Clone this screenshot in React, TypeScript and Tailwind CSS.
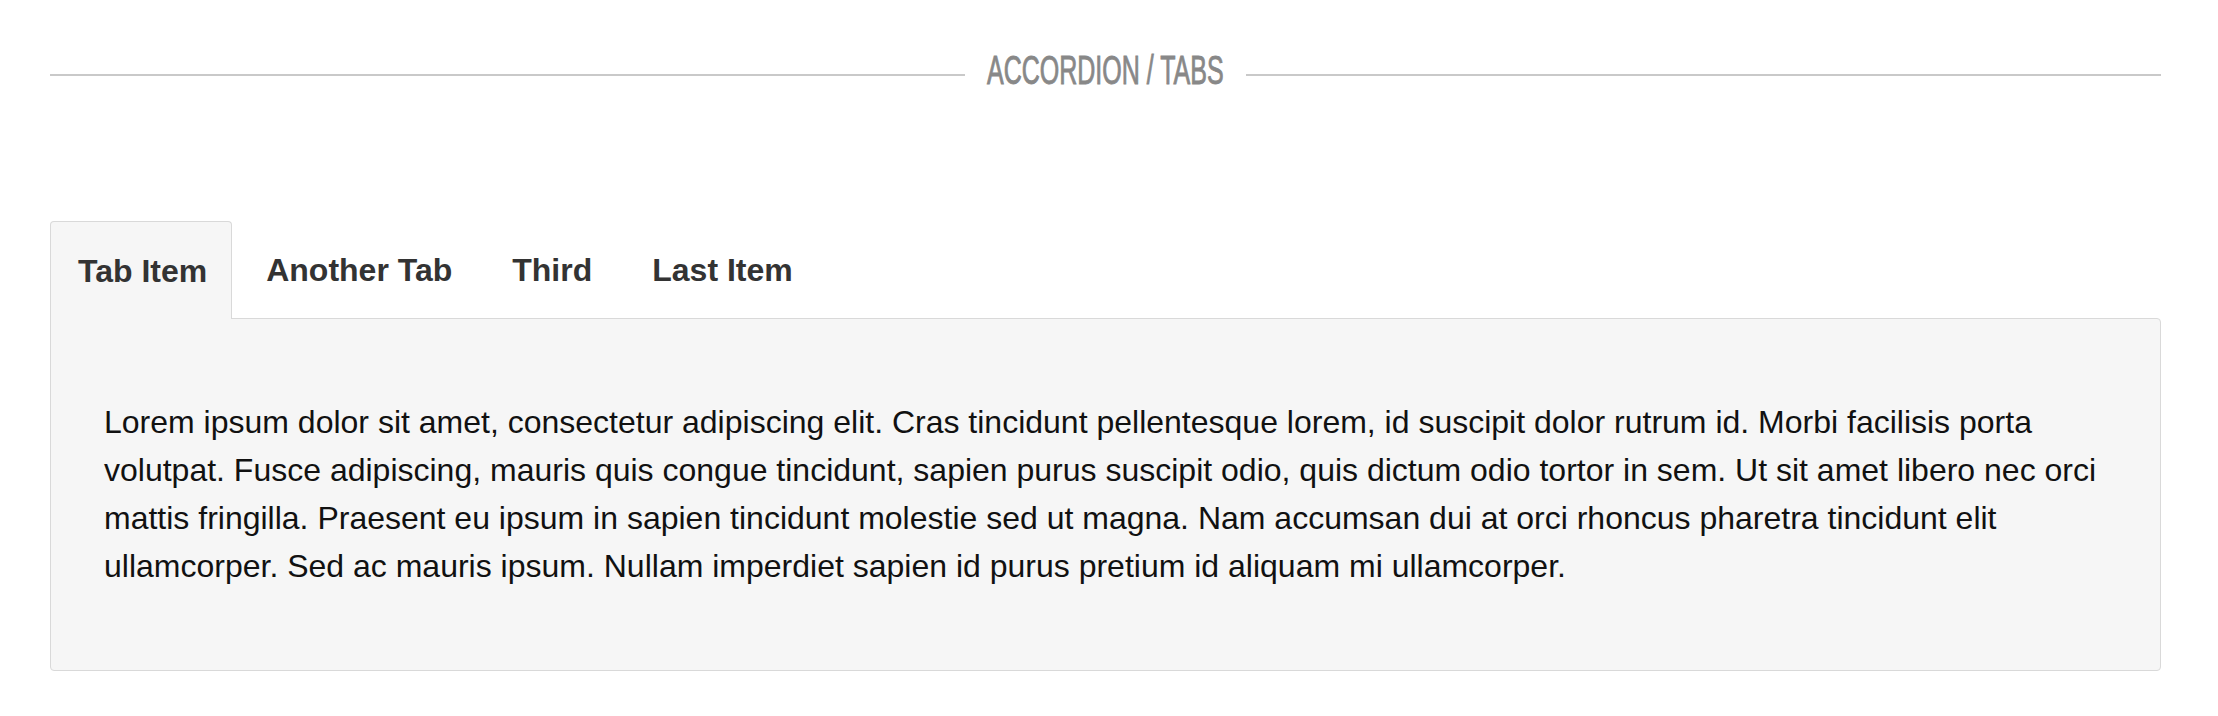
import React, { useState } from 'react'

const tabs = ['Tab Item', 'Another Tab', 'Third', 'Last Item']

const lines = [
  'Lorem ipsum dolor sit amet, consectetur adipiscing elit. Cras tincidunt pellentesque lorem, id suscipit dolor rutrum id. Morbi facilisis porta',
  'volutpat. Fusce adipiscing, mauris quis congue tincidunt, sapien purus suscipit odio, quis dictum odio tortor in sem. Ut sit amet libero nec orci',
  'mattis fringilla. Praesent eu ipsum in sapien tincidunt molestie sed ut magna. Nam accumsan dui at orci rhoncus pharetra tincidunt elit',
  'ullamcorper. Sed ac mauris ipsum. Nullam imperdiet sapien id purus pretium id aliquam mi ullamcorper.',
]

const App = () => {
  const [active, setActive] = useState(0)

  return (
    <div className="min-h-[716px] bg-white pl-[50px] pr-[57px] font-['Liberation_Sans',Arial,sans-serif]">
      {/* section heading */}
      <div className="flex items-start pt-[50px]">
        <div className="mt-[24px] h-[2px] flex-1 bg-[#c9c9c9]" />
        <div className="mx-[21px] flex h-[40px] w-[239px] justify-center">
          <span className="inline-block origin-center scale-x-[0.625] whitespace-nowrap text-[40px] leading-[40px] text-[#888] [-webkit-text-stroke:0.9px_#888]">
            ACCORDION / TABS
          </span>
        </div>
        <div className="mt-[24px] h-[2px] flex-1 bg-[#c9c9c9]" />
      </div>

      {/* tabs */}
      <div className="mt-[131px]">
        <div className="flex">
          {tabs.map((t, i) => (
            <button
              key={t}
              onClick={() => setActive(i)}
              className={
                i === active
                  ? 'relative z-10 -mb-px mr-[8px] flex h-[98px] items-center rounded-t-[4px] border border-b-0 border-[#d9d9d9] bg-[#f6f6f6] pl-[27px] pr-[24px] text-[32px] font-bold text-[#333]'
                  : 'relative -mb-px mr-[8px] flex h-[98px] items-center border border-transparent px-[25px] text-[32px] font-bold text-[#333]'
              }
            >
              {t}
            </button>
          ))}
        </div>
        <div className="rounded-b-[4px] rounded-tr-[4px] border border-[#d9d9d9] bg-[#f6f6f6] px-[53px] pb-[80px] pt-[79px]">
          <p className="whitespace-nowrap text-[32px] leading-[48px] text-[#111]">
            {lines.map((l, i) => (
              <React.Fragment key={i}>
                {l}
                {i < lines.length - 1 && <br />}
              </React.Fragment>
            ))}
          </p>
        </div>
      </div>
    </div>
  )
}

export default App
